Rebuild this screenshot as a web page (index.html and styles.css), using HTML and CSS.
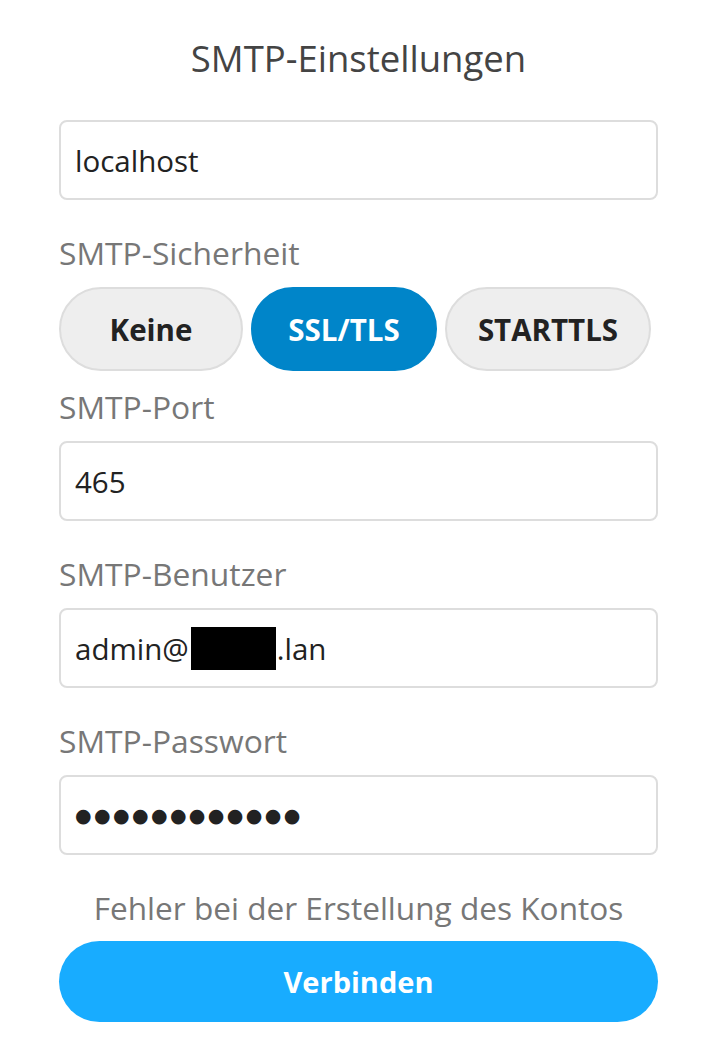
FILE: index.html
```html
<!DOCTYPE html>
<html lang="de">
<head>
<meta charset="utf-8">
<title>SMTP-Einstellungen</title>
<link rel="stylesheet" href="styles.css">
</head>
<body>
<main class="form">
  <h1 class="title">SMTP-Einstellungen</h1>
  <div class="field">localhost</div>
  <div class="label">SMTP-Sicherheit</div>
  <div class="segmented">
    <button class="seg seg-none">Keine</button>
    <button class="seg seg-ssl active">SSL/TLS</button>
    <button class="seg seg-start">STARTTLS</button>
  </div>
  <div class="label">SMTP-Port</div>
  <div class="field">465</div>
  <div class="label">SMTP-Benutzer</div>
  <div class="field">admin@<span class="redact"></span>.lan</div>
  <div class="label">SMTP-Passwort</div>
  <div class="field"><span class="dots">●●●●●●●●●●●●</span></div>
  <p class="error">Fehler bei der Erstellung des Kontos</p>
  <button class="primary">Verbinden</button>
</main>
</body>
</html>
```
FILE: styles.css
```css
html, body {
  margin: 0;
  padding: 0;
  background: #ffffff;
}
body {
  font-family: "Open Sans", "Noto Sans", sans-serif;
}
.form {
  width: 599px;
  margin-left: 59px;
  display: flex;
  flex-direction: column;
}
.title {
  margin: 34px 0 38px;
  font-size: 36.5px;
  line-height: 48px;
  font-weight: 400;
  color: #444444;
  text-align: center;
}
.field {
  box-sizing: border-box;
  height: 80px;
  border: 2px solid #dddddd;
  border-radius: 8px;
  padding: 0 14px;
  display: flex;
  align-items: center;
  font-size: 29.5px;
  color: #222222;
  margin-bottom: 17px;
}
.label {
  margin-top: 16px;
  margin-bottom: 14px;
  font-size: 31.8px;
  line-height: 40px;
  color: #777777;
}
.segmented {
  display: flex;
  gap: 8px;
}
.seg {
  box-sizing: border-box;
  height: 84px;
  border-radius: 42px;
  border: 2px solid #dddddd;
  background: #eeeeee;
  color: #222222;
  font-family: inherit;
  font-size: 29.5px;
  font-weight: 700;
  padding: 0;
}
.seg-none { width: 184px; }
.seg-ssl { width: 186px; }
.seg-start { width: 206px; }
.seg.active {
  background: #0085c9;
  border-color: #0085c9;
  color: #ffffff;
}
.redact {
  display: inline-block;
  width: 85px;
  height: 43px;
  background: #000000;
  margin: 0 1px 0 2px;
}
.dots {
  font-family: "DejaVu Sans", sans-serif;
  font-size: 19px;
  letter-spacing: 2.4px;
  color: #222222;
}
.error {
  margin: 12px 0 9px;
  font-size: 31.6px;
  line-height: 48px;
  color: #777777;
  text-align: center;
}
.primary {
  height: 81px;
  border: none;
  border-radius: 41px;
  background: #18acff;
  color: #ffffff;
  font-family: inherit;
  font-size: 29px;
  font-weight: 700;
}
```
